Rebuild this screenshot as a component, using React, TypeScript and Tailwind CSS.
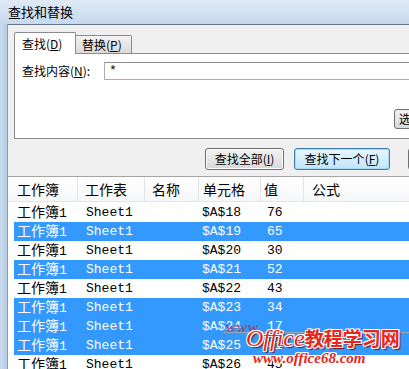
import React from 'react';

const ui = { fontFamily: '"Noto Sans CJK SC", "Noto Sans", sans-serif' };
const mono = { fontFamily: '"Liberation Mono", "Noto Sans CJK SC", monospace' };

const rows: [string, string, boolean][] = [
  ['$A$18', '76', false],
  ['$A$19', '65', true],
  ['$A$20', '30', false],
  ['$A$21', '52', true],
  ['$A$22', '43', false],
  ['$A$23', '34', true],
  ['$A$24', '17', true],
  ['$A$25', '41', true],
  ['$A$26', '45', false],
];

function Btn({ label, k, w, primary }: { label: string; k: string; w: string; primary?: boolean }) {
  return (
    <div
      className={`${w} h-[22px] shrink-0 flex items-center justify-center rounded-[3px] border text-[12px] text-black ${
        primary
          ? 'border-[#3c7fb1] bg-gradient-to-b from-[#eaf6fd] to-[#bee6fd] shadow-[inset_0_0_0_1px_#a7d9f5]'
          : 'border-[#707070] bg-gradient-to-b from-[#f2f2f2] to-[#d9d9d9] shadow-[inset_0_0_0_1px_#fcfcfc]'
      }`}
      style={ui}
    >
      {label}(<span className="underline">{k}</span>)
    </div>
  );
}

export default function App() {
  return (
    <div className="relative w-[409px] h-[369px] overflow-hidden bg-[#c4d6eb]" style={ui}>
      {/* 标题栏 */}
      <div className="h-[24px] flex items-center pl-[8px] text-[13px] text-black bg-gradient-to-b from-[#dfeaf6] to-[#c7d9ee]">
        查找和替换
      </div>

      <div className="flex h-[345px]">
        {/* 左边框 */}
        <div className="w-[8px] shrink-0 bg-gradient-to-r from-[#c9daee] to-[#b6cbe3] border-r border-[#8a9cb2]" />

        <div className="flex-1 flex flex-col bg-[#f0f0f0] border-t border-[#66778c] min-w-0">
          {/* 选项卡 */}
          <div className="flex items-end pl-[6px] pt-[6px] h-[28px] shrink-0">
            <div className="relative z-10 -mb-px h-[22px] w-[62px] flex items-center pl-[7px] border border-b-0 border-[#898c95] bg-white text-[12px] rounded-t-[2px]">
              查找(<span className="underline">D</span>)
            </div>
            <div className="h-[18px] w-[56px] flex items-center pl-[6px] border border-l-0 border-b-0 border-[#898c95] bg-gradient-to-b from-[#f3f3f3] to-[#dadada] text-[12px] rounded-tr-[2px]">
              替换(<span className="underline">P</span>)
            </div>
          </div>

          {/* 面板 */}
          <div className="ml-[6px] w-[420px] h-[86px] shrink-0 border border-[#898c95] bg-white flex flex-col">
            <div className="flex items-center mt-[8px] pl-[7px]">
              <span className="w-[82px] text-[12px]">
                查找内容(<span className="underline">N</span>):
              </span>
              <div className="flex-1 h-[18px] border border-[#abadb3] border-t-[#8e8f8f] flex items-center pl-[4px] text-[13px]" style={mono}>
                *
              </div>
            </div>
            <div className="ml-[379px] mt-[29px] h-[20px] w-[50px] rounded-[3px] border border-[#707070] bg-gradient-to-b from-[#f2f2f2] to-[#d9d9d9] flex items-center pl-[4px] text-[12px]">
              选项
            </div>
          </div>

          {/* 按钮 */}
          <div className="flex mt-[9px] ml-[197px] gap-[10px] shrink-0">
            <Btn label="查找全部" k="I" w="w-[79px]" />
            <Btn label="查找下一个" k="F" w="w-[96px]" primary />
            <div className="ml-[8px] w-[40px] h-[22px] shrink-0 rounded-[3px] border border-[#707070] bg-gradient-to-b from-[#f2f2f2] to-[#d9d9d9]" />
          </div>

          {/* 结果列表 */}
          <div className="mt-[6px] flex-1 bg-white border-t border-[#a5a5a5] text-black">
            <div className="h-[25px] flex items-center text-[14px] bg-gradient-to-b from-white to-[#f6f7f9] border-b border-[#e3e5e8]">
              <div className="w-[70px] pl-[9px] h-full flex items-center border-r border-[#e1e3e6]">工作簿</div>
              <div className="w-[67px] pl-[7px] h-full flex items-center border-r border-[#e1e3e6]">工作表</div>
              <div className="w-[54px] pl-[7px] h-full flex items-center border-r border-[#e1e3e6]">名称</div>
              <div className="w-[62px] pl-[4px] h-full flex items-center border-r border-[#e1e3e6]">单元格</div>
              <div className="w-[43px] pl-[3px] h-full flex items-center border-r border-[#e1e3e6]">值</div>
              <div className="pl-[8px] h-full flex items-center">公式</div>
            </div>
            <div className="pt-px">
              {rows.map(([cell, val, sel]) => (
                <div key={cell} className="pl-[6px] h-[19px]">
                  <div className={`h-full flex items-center ${sel ? 'bg-[#3399ff] text-white' : ''}`}>
                    <div className="w-[64px] pl-[3px] text-[14px]" style={ui}>
                      工作簿<span className="text-[13px]" style={mono}>1</span>
                    </div>
                    <div className="w-[67px] pl-[8px] text-[13px]" style={mono}>Sheet1</div>
                    <div className="w-[54px]" />
                    <div className="w-[62px] pl-[3px] text-[13px]" style={mono}>{cell}</div>
                    <div className="w-[43px] pl-[6px] text-[13px]" style={mono}>{val}</div>
                  </div>
                </div>
              ))}
            </div>
          </div>
        </div>
      </div>

      {/* 水印 */}
      <div className="absolute left-[224px] top-[332px] w-[190px] h-px bg-[#9aa7b5]" />
      <div
        className="absolute left-[226px] top-[316px] text-[15px] font-bold italic text-[#b0303a] opacity-70 tracking-[1px]"
        style={{ fontFamily: '"Liberation Serif", serif' }}
      >
        www.
      </div>
      <div
        className="absolute left-[246px] top-[326px] flex items-baseline leading-none text-[#e8261c]"
        style={{ textShadow: '1px 1px 0 #fff, -1px -1px 0 #fff, 1px -1px 0 #fff, -1px 1px 0 #fff, 2px 2px 1px #7a1010' }}
      >
        <span className="text-[24px] italic" style={{ fontFamily: '"Liberation Serif", serif' }}>
          Office
        </span>
        <span className="text-[19px] font-bold" style={ui}>
          教程学习网
        </span>
      </div>
      <div
        className="absolute left-[253px] top-[351px] text-[15px] font-bold italic leading-none text-[#e8261c]"
        style={{ fontFamily: '"Liberation Serif", serif', textShadow: '1px 1px 0 #fff, -1px -1px 0 #fff, 1px -1px 0 #fff, -1px 1px 0 #fff' }}
      >
        www.office68.com
      </div>
    </div>
  );
}
